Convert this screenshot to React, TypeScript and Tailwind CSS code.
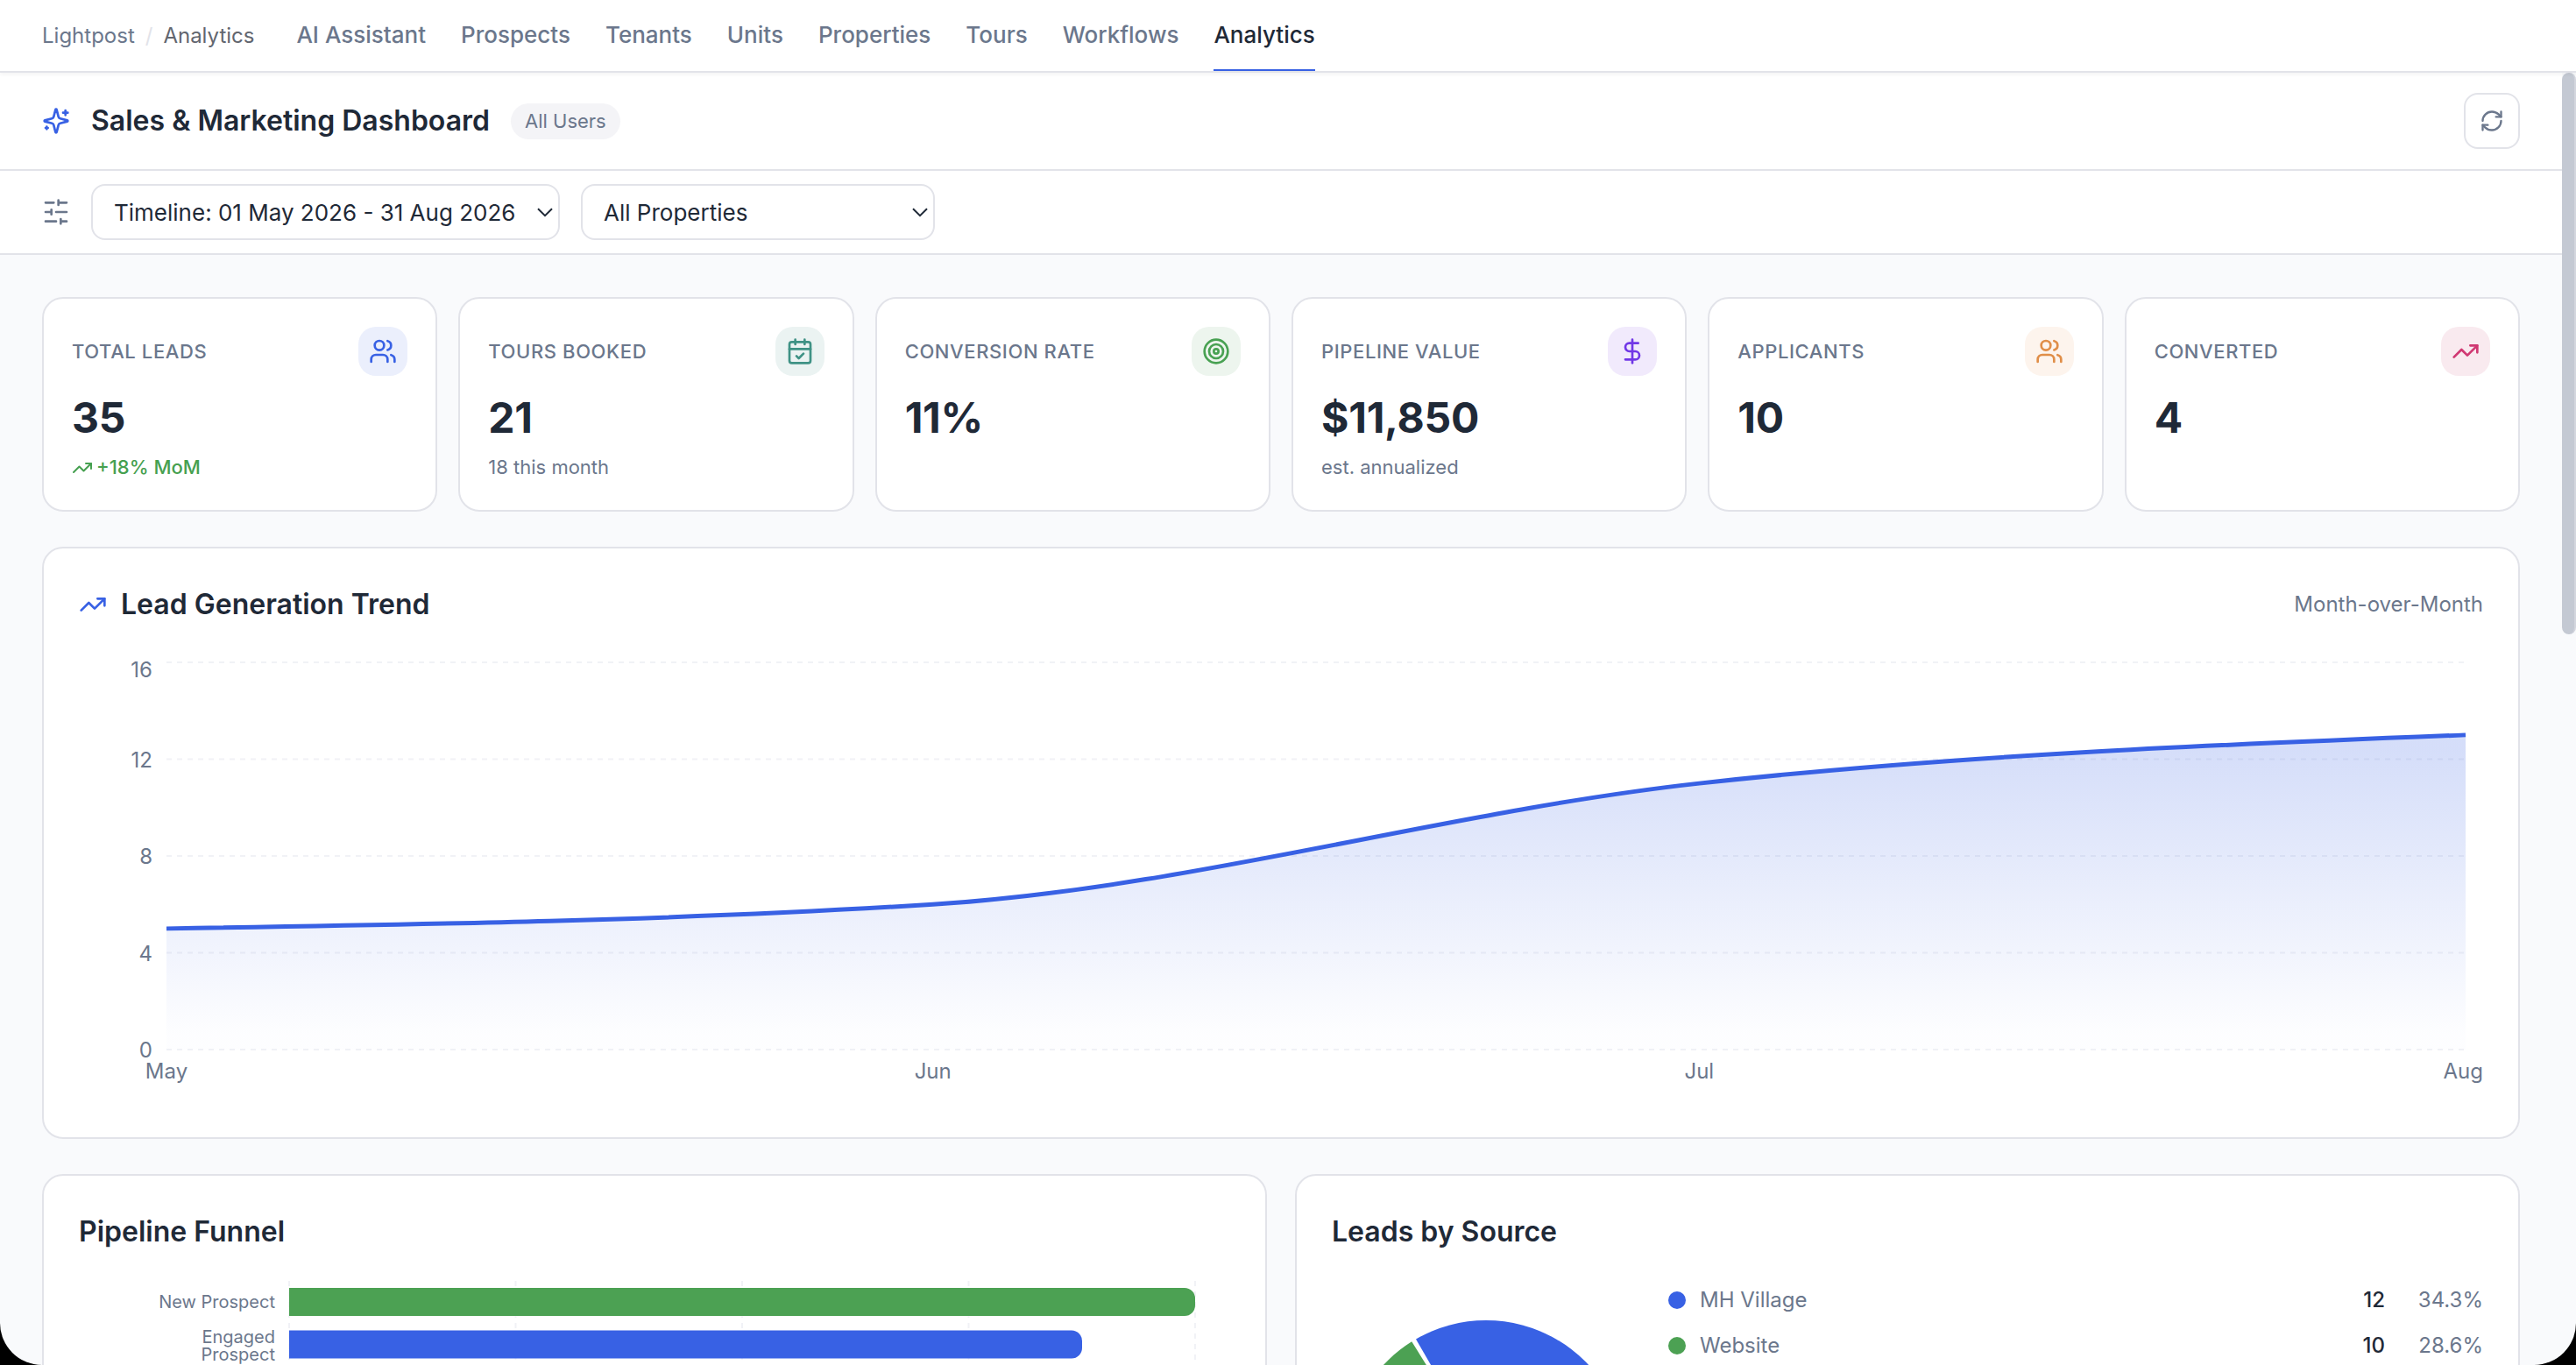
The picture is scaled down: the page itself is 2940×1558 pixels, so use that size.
import {
  Users,
  CalendarCheck,
  Target,
  DollarSign,
  TrendingUp,
  RefreshCw,
  type LucideIcon,
} from "lucide-react";

const navItems = [
  "AI Assistant",
  "Prospects",
  "Tenants",
  "Units",
  "Properties",
  "Tours",
  "Workflows",
  "Analytics",
];

interface Stat {
  label: string;
  value: string;
  icon: LucideIcon;
  tone: string;
  trend?: string;
  note?: string;
}

const stats: Stat[] = [
  { label: "TOTAL LEADS", value: "35", icon: Users, tone: "bg-[#ebeffc] text-[#3861e4]", trend: "+18% MoM" },
  { label: "TOURS BOOKED", value: "21", icon: CalendarCheck, tone: "bg-[#ebf3f2] text-[#3f9285]", note: "18 this month" },
  { label: "CONVERSION RATE", value: "11%", icon: Target, tone: "bg-[#edf5ee] text-[#48a152]" },
  { label: "PIPELINE VALUE", value: "$11,850", icon: DollarSign, tone: "bg-[#f1eafc] text-[#7138e6]", note: "est. annualized" },
  { label: "APPLICANTS", value: "10", icon: Users, tone: "bg-[#fdf4ed] text-[#e08e48]" },
  { label: "CONVERTED", value: "4", icon: TrendingUp, tone: "bg-[#f9eaef] text-[#d03872]" },
];

const trend = [
  { month: "May", leads: 5 },
  { month: "Jun", leads: 6 },
  { month: "Jul", leads: 11 },
  { month: "Aug", leads: 13 },
];

const sources = [
  { name: "MH Village", count: 12, share: "34.3%", dot: "bg-[#3861e4]" },
  { name: "Website", count: 10, share: "28.6%", dot: "bg-[#4ca153]" },
];

const SparklesIcon = () => (
  <svg
    className="w-8 h-8 text-[#3861e4]"
    viewBox="0 0 24 24"
    fill="none"
    stroke="currentColor"
    strokeWidth={2}
    strokeLinecap="round"
    strokeLinejoin="round"
  >
    <path d="M9.937 15.5A2 2 0 0 0 8.5 14.063l-6.135-1.582a.5.5 0 0 1 0-.962L8.5 9.936A2 2 0 0 0 9.937 8.5l1.582-6.135a.5.5 0 0 1 .963 0L14.063 8.5A2 2 0 0 0 15.5 9.937l6.135 1.581a.5.5 0 0 1 0 .964L15.5 14.063a2 2 0 0 0-1.437 1.437l-1.582 6.135a.5.5 0 0 1-.963 0z" />
    <path d="M20 3v4M22 5h-4M4 17v2M5 18H3" />
  </svg>
);

const SlidersIcon = () => (
  <svg
    className="w-8 h-8 text-[#6b778c]"
    viewBox="0 0 24 24"
    fill="none"
    stroke="currentColor"
    strokeWidth={2}
    strokeLinecap="round"
  >
    <path d="M21 4h-7M10 4H3M21 12h-9M8 12H3M21 20h-5M12 20H3M14 2v4M8 10v4M16 18v4" />
  </svg>
);

const FilterSelect = ({ label, width }: { label: string; width: string }) => (
  <div
    className={`${width} h-16 flex items-center justify-between rounded-2xl border-2 border-[#e2e3e9] bg-white pl-6 pr-1.5 text-[26px] text-[#1f2937]`}
  >
    <span className="whitespace-nowrap">{label}</span>
    <svg className="w-[18px] h-[11px]" viewBox="0 0 18 11" fill="none" stroke="currentColor" strokeWidth={2}>
      <path d="M1 1.2l8 8 8-8" />
    </svg>
  </div>
);

const StatCard = ({ stat }: { stat: Stat }) => {
  const Icon = stat.icon;
  return (
    <div className="h-[245px] rounded-[24px] border-2 border-[#e2e3e9] bg-white p-8">
      <div className="flex items-center justify-between">
        <span className="text-[22px] font-medium tracking-[0.6px] text-[#6b778c]">{stat.label}</span>
        <div className={`w-14 h-14 rounded-[20px] flex items-center justify-center ${stat.tone}`}>
          <Icon size={32} />
        </div>
      </div>
      <div className="mt-4 text-[48px] leading-[63px] font-bold tracking-[-0.25px] text-[#1f2937]">{stat.value}</div>
      {stat.trend && (
        <div className="mt-[9px] flex items-center gap-1 text-[22px] leading-[33px] font-medium text-[#46a050]">
          <TrendingUp size={24} />
          {stat.trend}
        </div>
      )}
      {stat.note && <div className="mt-[9px] text-[22px] leading-[33px] text-[#6b778c]">{stat.note}</div>}
    </div>
  );
};

// Plot area, in px inside the chart svg
const LEFT = 100;
const RIGHT = 2724;
const TOP = 8;
const BOTTOM = 450;

const TrendChart = () => {
  const step = (RIGHT - LEFT) / 3;
  const y = (v: number) => BOTTOM - ((BOTTOM - TOP) * v) / 16;
  const pts = trend.map((d, i) => ({ x: LEFT + i * step, v: d.leads }));

  // monotone tangents, in leads per step
  const d = [1, 2, 3].map((i) => pts[i].v - pts[i - 1].v);
  const t1 = 2 * Math.min(d[0], d[1], (d[0] + d[1]) / 4);
  const t2 = 2 * Math.min(d[1], d[2], (d[1] + d[2]) / 4);
  const t = [(3 * d[0] - t1) / 2, t1, t2, (3 * d[2] - t2) / 2];

  let line = `M${pts[0].x},${y(pts[0].v)}`;
  for (let i = 1; i < pts.length; i++) {
    const a = pts[i - 1];
    const b = pts[i];
    line += `C${a.x + step / 3},${y(a.v + t[i - 1] / 3)} ${b.x - step / 3},${y(b.v - t[i] / 3)} ${b.x},${y(b.v)}`;
  }

  return (
    <svg className="mt-[34px] block" width={2744} height={500} fontSize={24} fill="#6b778c">
      <defs>
        <linearGradient id="leadsFill" x1="0" y1="0" x2="0" y2="1">
          <stop offset="5%" stopColor="#3861e4" stopOpacity={0.21} />
          <stop offset="95%" stopColor="#3861e4" stopOpacity={0.01} />
        </linearGradient>
      </defs>
      {[0, 4, 8, 12, 16].map((v) => (
        <g key={v}>
          <line x1={LEFT} x2={RIGHT} y1={y(v)} y2={y(v)} stroke="#f1f2f6" strokeWidth={2} strokeDasharray="6 6" />
          <text x={84} y={v === 16 ? 25 : y(v) + 9} textAnchor="end">
            {v}
          </text>
        </g>
      ))}
      <path d={`${line}V${BOTTOM}H${LEFT}Z`} fill="url(#leadsFill)" />
      <path d={line} fill="none" stroke="#3861e4" strokeWidth={5} />
      {trend.map((p, i) => (
        <text
          key={p.month}
          x={i === 3 ? 2744 : pts[i].x}
          y={483}
          textAnchor={i === 3 ? "end" : "middle"}
        >
          {p.month}
        </text>
      ))}
    </svg>
  );
};

const FunnelChart = () => (
  <svg className="mt-[18px] block" width={1314} height={200} fontSize={20} fill="#6b778c">
    {[240, 498.5, 757, 1015.5, 1274].map((x) => (
      <line key={x} x1={x} x2={x} y1={14} y2={200} stroke="#f1f2f6" strokeWidth={2} strokeDasharray="6 6" />
    ))}
    <path d="M240 22h1022a12 12 0 0 1 12 12v8a12 12 0 0 1-12 12H240z" fill="#4ca153" />
    <path d="M240 70.5h893a12 12 0 0 1 12 12v8a12 12 0 0 1-12 12H240z" fill="#3861e4" />
    <text x={224} y={45} textAnchor="end">New Prospect</text>
    <text x={224} y={84.5} textAnchor="end">Engaged</text>
    <text x={224} y={104.5} textAnchor="end">Prospect</text>
  </svg>
);

// Slice between two angles, counter-clockwise from 3 o'clock
const slice = (from: number, to: number) => {
  const at = (deg: number) => {
    const a = (deg * Math.PI) / 180;
    return `${160 + 160 * Math.cos(a)},${160 - 160 * Math.sin(a)}`;
  };
  return `M160,160L${at(from)}A160,160 0 0 0 ${at(to)}Z`;
};

const App = () => {
  return (
    <div className="w-[2940px] h-[1558px] overflow-hidden bg-black font-['Inter',sans-serif]">
      <div className="h-full flex flex-col overflow-hidden rounded-b-[48px] bg-[#f9fafc]">
        <nav className="relative z-10 h-[83px] shrink-0 flex items-center border-b-2 border-[#e2e3e9] bg-white px-12 shadow-[0_2px_4px_rgba(0,0,0,0.05)]">
          <div className="flex items-center text-[24px] text-[#6b778c]">
            <span>Lightpost</span>
            <span className="mx-3 text-[#e2e3e9]">/</span>
            <span className="text-[#62666f]">Analytics</span>
          </div>
          <div className="ml-12 flex h-full gap-10 text-[26px] font-medium text-[#6b778c]">
            {navItems.map((item) => (
              <a
                key={item}
                className={
                  item === "Analytics"
                    ? "flex items-center border-b-2 border-[#3861e4] text-[#1f2937]"
                    : "flex items-center border-b-2 border-transparent"
                }
              >
                {item}
              </a>
            ))}
          </div>
        </nav>

        <div className="flex flex-1 min-h-0">
          <div className="w-[2924px] overflow-hidden">
            <header className="h-[112px] flex items-center justify-between border-b-2 border-[#e2e3e9] bg-white px-12">
              <div className="flex items-center gap-6">
                <SparklesIcon />
                <h1 className="text-[32px] leading-[46px] font-semibold text-[#1f2937]">Sales &amp; Marketing Dashboard</h1>
                <span className="rounded-full bg-[#f4f4f7] px-4 py-1 text-[22px] leading-[33px] text-[#6b778c]">
                  All Users
                </span>
              </div>
              <button className="w-16 h-16 flex items-center justify-center rounded-2xl border-2 border-[#e2e3e9] text-[#6b778c]">
                <RefreshCw size={28} />
              </button>
            </header>

            <div className="h-24 flex items-center gap-6 border-b-2 border-[#e2e3e9] bg-white px-12">
              <SlidersIcon />
              <FilterSelect label="Timeline: 01 May 2026 - 31 Aug 2026" width="w-[535px]" />
              <FilterSelect label="All Properties" width="w-[404px]" />
            </div>

            <main className="p-12 flex flex-col gap-10">
              <div className="grid grid-cols-6 gap-6">
                {stats.map((stat) => (
                  <StatCard key={stat.label} stat={stat} />
                ))}
              </div>

              <section className="h-[676px] shrink-0 rounded-[24px] border-2 border-[#e2e3e9] bg-white p-10">
                <div className="h-12 flex items-center justify-between">
                  <div className="flex items-center gap-4">
                    <TrendingUp size={32} className="text-[#3861e4]" />
                    <h2 className="text-[32px] font-semibold text-[#1f2937]">Lead Generation Trend</h2>
                  </div>
                  <span className="text-[24px] text-[#6b778c]">Month-over-Month</span>
                </div>
                <TrendChart />
              </section>

              <div className="grid grid-cols-2 gap-8">
                <section className="h-[700px] rounded-[24px] border-2 border-[#e2e3e9] bg-white p-10">
                  <h2 className="text-[32px] leading-[48px] font-semibold text-[#1f2937]">Pipeline Funnel</h2>
                  <FunnelChart />
                </section>

                <section className="h-[700px] rounded-[24px] border-2 border-[#e2e3e9] bg-white p-10">
                  <h2 className="text-[32px] leading-[48px] font-semibold text-[#1f2937]">Leads by Source</h2>
                  <div className="mt-9 flex">
                    <svg className="mt-[41px] ml-4 mr-12 shrink-0" width={320} height={320}>
                      <path d={slice(0, 120)} fill="#3861e4" />
                      <path d={slice(122, 222)} fill="#4ca153" />
                    </svg>
                    <div className="flex-1 flex flex-col gap-4 text-[24px] leading-9 text-[#6b778c]">
                      {sources.map((source) => (
                        <div key={source.name} className="flex items-center">
                          <span className={`w-5 h-5 mr-4 rounded-full ${source.dot}`} />
                          <span className="flex-1">{source.name}</span>
                          <span className="font-medium text-[#1f2937]">{source.count}</span>
                          <span className="w-28 text-right">{source.share}</span>
                        </div>
                      ))}
                    </div>
                  </div>
                </section>
              </div>
            </main>
          </div>

          {/* scrollbar */}
          <div className="w-4">
            <div className="h-[641px] rounded-lg border-r-2 border-[#d3d6de] bg-[#c4c9d3]" />
          </div>
        </div>
      </div>
    </div>
  );
};

export default App;
